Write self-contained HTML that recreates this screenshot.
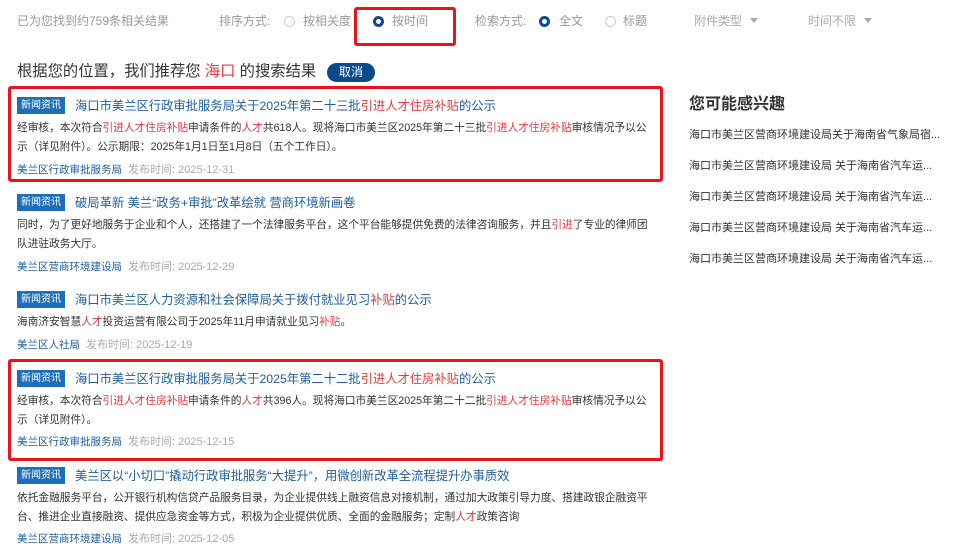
<!DOCTYPE html><html><head><meta charset="utf-8"><style>
body{margin:0;width:960px;height:557px;background:#fff;position:relative;overflow:hidden;font-family:"Liberation Sans","Noto Sans CJK SC",sans-serif;color:#333}
.a{position:absolute;white-space:nowrap;line-height:1}
.g{color:#999;font-size:12px}
.rd{position:absolute;width:9px;height:9px;border:1px solid #ccc;border-radius:50%}
.rf{position:absolute;width:5px;height:5px;border:3px solid #0d4a8a;border-radius:50%}
.tri{display:inline-block;border:4px solid transparent;border-top:5px solid #aaa;margin-left:8px;vertical-align:-2px}
.box{position:absolute;border:3px solid #e8141c;border-radius:3px}
.bd{position:absolute;left:17px;width:48px;height:17px;background:#1c6fb8;color:#fff;font-size:10px;line-height:17px;text-align:center}
.t{position:absolute;left:75px;font-size:12.3px;color:#1f5fa0;white-space:nowrap;line-height:16px}
.p{position:absolute;left:17px;width:636px;font-size:10.7px;line-height:19px;color:#333}
.s{position:absolute;left:17px;font-size:10.5px;color:#1f5fa0;white-space:nowrap}
.s span{color:#aaa;margin-left:6px;font-size:11px}
.r{color:#e4393c}
.l{position:absolute;left:689px;font-size:11px;color:#333;white-space:nowrap}
</style></head><body>
<div class="a g" style="left:17px;top:15px">已为您找到约759条相关结果</div>
<div class="a g" style="left:219px;top:15px">排序方式:</div>
<div class="rd" style="left:284px;top:16px"></div>
<div class="a g" style="left:303px;top:15px">按相关度</div>
<div class="rf" style="left:373px;top:16px"></div>
<div class="a g" style="left:392px;top:15px">按时间</div>
<div class="box" style="left:354px;top:7px;width:96px;height:33px"></div>
<div class="a g" style="left:475px;top:15px">检索方式:</div>
<div class="rf" style="left:539px;top:16px"></div>
<div class="a g" style="left:559px;top:15px">全文</div>
<div class="rd" style="left:605px;top:16px"></div>
<div class="a g" style="left:623px;top:15px">标题</div>
<div class="a g" style="left:694px;top:15px;color:#aaa">附件类型<i class="tri"></i></div>
<div class="a g" style="left:808px;top:15px;color:#aaa">时间不限<i class="tri"></i></div>
<div class="a" style="left:17px;top:64px;font-size:15.3px">根据您的位置，我们推荐您 <span class="r">海口</span> 的搜索结果</div>
<div class="a" style="left:327px;top:63px;width:48px;height:19px;background:#0d4a8a;border-radius:10px;color:#fff;font-size:12px;line-height:19px;text-align:center">取消</div>

<div class="box" style="left:8px;top:86px;width:649px;height:90px"></div>
<div class="bd" style="top:97px">新闻资讯</div>
<div class="t" style="top:98px">海口市美兰区行政审批服务局关于2025年第二十三批<span class="r">引进人才住房补贴</span>的公示</div>
<div class="p" style="top:119px">经审核，本次符合<span class="r">引进人才住房补贴</span>申请条件的<span class="r">人才</span>共618人。现将海口市美兰区2025年第二十三批<span class="r">引进人才住房补贴</span>审核情况予以公示（详见附件）。公示期限：2025年1月1日至1月8日（五个工作日）。</div>
<div class="s" style="top:161px">美兰区行政审批服务局<span>发布时间: 2025-12-31</span></div>

<div class="bd" style="top:194px">新闻资讯</div>
<div class="t" style="top:195px">破局革新 美兰“政务+审批”改革绘就 营商环境新画卷</div>
<div class="p" style="top:216px">同时，为了更好地服务于企业和个人，还搭建了一个法律服务平台，这个平台能够提供免费的法律咨询服务，并且<span class="r">引进</span>了专业的律师团队进驻政务大厅。</div>
<div class="s" style="top:258px">美兰区营商环境建设局<span>发布时间: 2025-12-29</span></div>

<div class="bd" style="top:291px">新闻资讯</div>
<div class="t" style="top:292px">海口市美兰区人力资源和社会保障局关于拨付就业见习<span class="r">补贴</span>的公示</div>
<div class="p" style="top:313px">海南济安智慧<span class="r">人才</span>投资运营有限公司于2025年11月申请就业见习<span class="r">补贴</span>。</div>
<div class="s" style="top:336px">美兰区人社局<span>发布时间: 2025-12-19</span></div>

<div class="box" style="left:8px;top:359px;width:649px;height:96px"></div>
<div class="bd" style="top:370px">新闻资讯</div>
<div class="t" style="top:371px">海口市美兰区行政审批服务局关于2025年第二十二批<span class="r">引进人才住房补贴</span>的公示</div>
<div class="p" style="top:392px">经审核，本次符合<span class="r">引进人才住房补贴</span>申请条件的<span class="r">人才</span>共396人。现将海口市美兰区2025年第二十二批<span class="r">引进人才住房补贴</span>审核情况予以公示（详见附件）。</div>
<div class="s" style="top:433px">美兰区行政审批服务局<span>发布时间: 2025-12-15</span></div>

<div class="bd" style="top:467px">新闻资讯</div>
<div class="t" style="top:468px">美兰区以“小切口”撬动行政审批服务“大提升”，用微创新改革全流程提升办事质效</div>
<div class="p" style="top:489px">依托金融服务平台，公开银行机构信贷产品服务目录，为企业提供线上融资信息对接机制，通过加大政策引导力度、搭建政银企融资平台、推进企业直接融资、提供应急资金等方式，积极为企业提供优质、全面的金融服务；定制<span class="r">人才</span>政策咨询</div>
<div class="s" style="top:530px">美兰区营商环境建设局<span>发布时间: 2025-12-05</span></div>

<div class="a" style="left:689px;top:97px;font-size:16px;font-weight:bold">您可能感兴趣</div>
<div class="l" style="top:126px">海口市美兰区营商环境建设局关于海南省气象局宿...</div>
<div class="l" style="top:157px">海口市美兰区营商环境建设局 关于海南省汽车运...</div>
<div class="l" style="top:188px">海口市美兰区营商环境建设局 关于海南省汽车运...</div>
<div class="l" style="top:219px">海口市美兰区营商环境建设局 关于海南省汽车运...</div>
<div class="l" style="top:250px">海口市美兰区营商环境建设局 关于海南省汽车运...</div>
</body></html>
